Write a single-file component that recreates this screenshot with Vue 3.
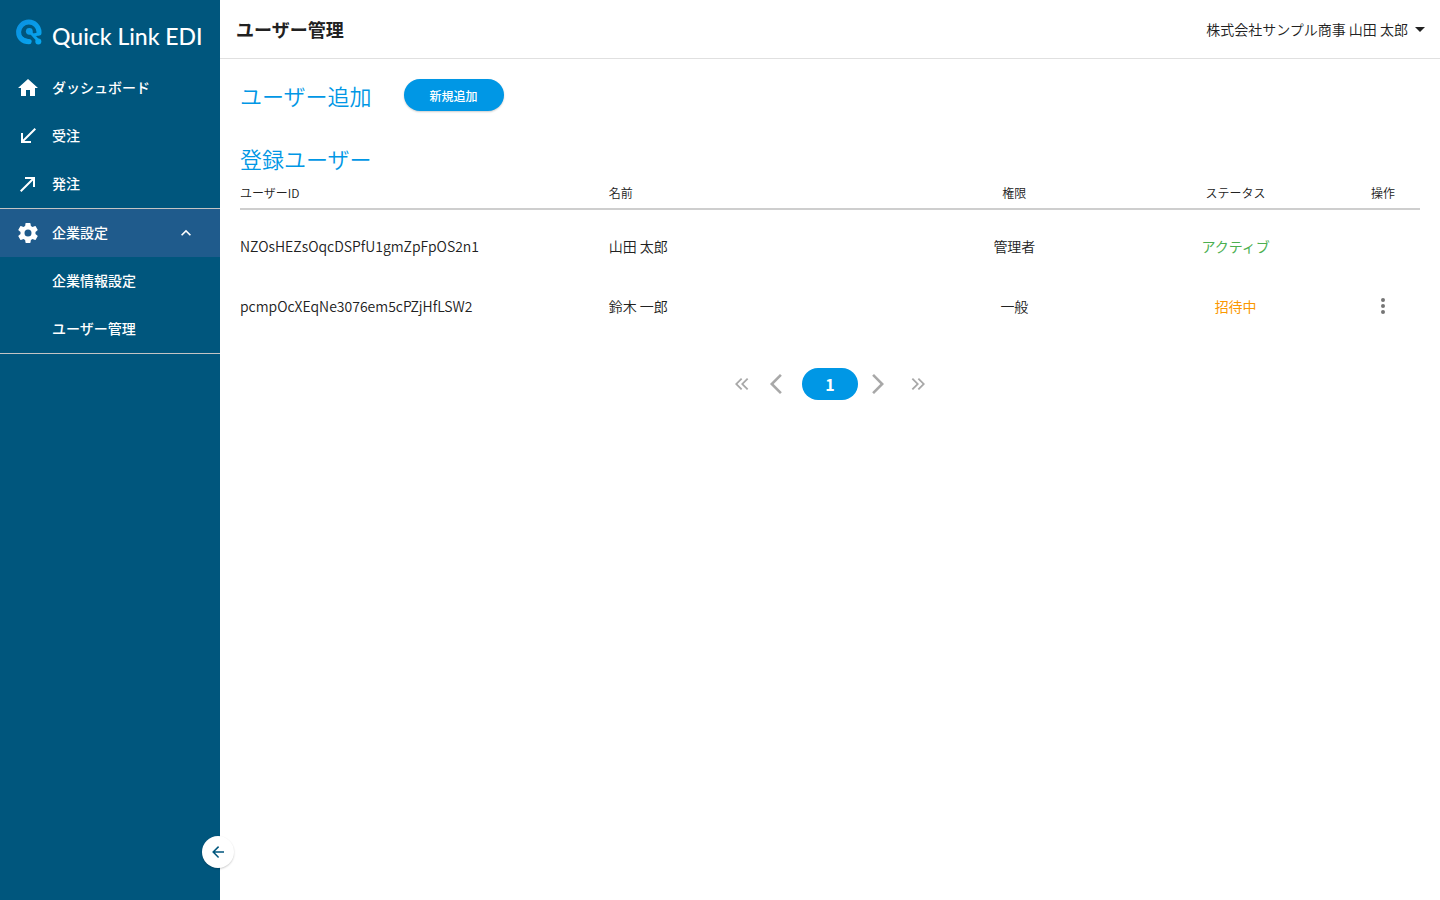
<template>
    <div class="layout">
        <aside class="sidebar">
            <a class="brand" href="#">
                <svg class="brand__mark" viewBox="0 0 26 26" aria-hidden="true">
                    <defs>
                        <linearGradient id="brandGradient" gradientUnits="userSpaceOnUse" x1="0" y1="0" x2="26" y2="26">
                            <stop offset="0" stop-color="#0b8fe0" />
                            <stop offset="1" stop-color="#06a8f0" />
                        </linearGradient>
                    </defs>
                    <g fill="none" stroke="url(#brandGradient)" stroke-linecap="round">
                        <path stroke-width="5" d="M23 14V13A10.2 10.2 0 0 0 12.8 3A10.2 10.2 0 0 0 2.6 13C2.6 19 7 22.8 13 22.8" />
                        <path stroke-width="3" d="M4 17C7 21 10 21.5 14 22M13.5 12.5l3.5 3.5 5.5 6M17.5 16l5-1" />
                    </g>
                    <g fill="url(#brandGradient)">
                        <circle cx="13.3" cy="12.3" r="3.4" />
                        <circle cx="22.3" cy="22.5" r="3" />
                    </g>
                </svg>
                <span class="brand__name">Quick Link EDI</span>
            </a>

            <nav class="nav">
                <a v-for="item in navItems" :key="item.label" class="nav__item" href="#">
                    <svg class="icon" viewBox="0 0 24 24" aria-hidden="true"><path :d="item.icon" /></svg>
                    <span class="nav__label">{{ item.label }}</span>
                </a>
                <div class="nav__group">
                    <button
                        type="button"
                        class="nav__item nav__item--active"
                        :aria-expanded="settingsOpen"
                        @click="settingsOpen = !settingsOpen"
                    >
                        <svg class="icon" viewBox="0 0 24 24" aria-hidden="true"><path :d="ICONS.cog" /></svg>
                        <span class="nav__label">企業設定</span>
                        <svg
                            class="icon icon--sm nav__chevron"
                            :class="{ 'nav__chevron--closed': !settingsOpen }"
                            viewBox="0 0 24 24"
                            aria-hidden="true"
                        >
                            <path :d="ICONS.chevronUp" />
                        </svg>
                    </button>
                    <template v-if="settingsOpen">
                        <a v-for="label in settingsItems" :key="label" class="nav__item nav__item--child" href="#">
                            <span class="nav__label">{{ label }}</span>
                        </a>
                    </template>
                </div>
            </nav>

            <button type="button" class="sidebar__toggle" aria-label="メニューを閉じる">
                <svg class="icon icon--xs" viewBox="0 0 24 24" aria-hidden="true"><path :d="ICONS.arrowLeft" /></svg>
            </button>
        </aside>

        <div class="page">
            <header class="topbar">
                <h1 class="topbar__title">ユーザー管理</h1>
                <button type="button" class="account">
                    <span>株式会社サンプル商事 山田 太郎</span>
                    <svg class="icon" viewBox="0 0 24 24" aria-hidden="true"><path d="M7 10l5 5 5-5z" /></svg>
                </button>
            </header>

            <main class="content">
                <section class="add">
                    <h2 class="heading">ユーザー追加</h2>
                    <button type="button" class="add__button">新規追加</button>
                </section>

                <section>
                    <h2 class="heading">登録ユーザー</h2>
                    <table class="users">
                        <thead>
                            <tr>
                                <th class="users__id">ユーザーID</th>
                                <th class="users__name">名前</th>
                                <th class="users__role">権限</th>
                                <th class="users__status">ステータス</th>
                                <th class="users__action">操作</th>
                            </tr>
                        </thead>
                        <tbody>
                            <tr v-for="user in users" :key="user.id">
                                <td>{{ user.id }}</td>
                                <td>{{ user.name }}</td>
                                <td class="center">{{ user.role }}</td>
                                <td class="center" :class="`status--${user.status}`">
                                    {{ STATUS_LABELS[user.status] }}
                                </td>
                                <td class="center">
                                    <button
                                        v-if="user.status === 'invited'"
                                        type="button"
                                        class="menu-button"
                                        aria-label="操作メニュー"
                                    >
                                        <svg class="icon" viewBox="0 0 24 24" aria-hidden="true">
                                            <path :d="ICONS.dots" />
                                        </svg>
                                    </button>
                                </td>
                            </tr>
                        </tbody>
                    </table>
                </section>

                <nav class="pager" aria-label="ページ">
                    <button type="button" class="pager__edge" aria-label="最初">
                        <svg class="icon" viewBox="0 0 24 24" aria-hidden="true"><path :d="ICONS.first" /></svg>
                    </button>
                    <button type="button" class="pager__step" aria-label="前へ">
                        <svg class="icon icon--lg" viewBox="0 0 24 24" aria-hidden="true"><path :d="ICONS.prev" /></svg>
                    </button>
                    <button type="button" class="pager__page" aria-current="page">1</button>
                    <button type="button" class="pager__step" aria-label="次へ">
                        <svg class="icon icon--lg" viewBox="0 0 24 24" aria-hidden="true"><path :d="ICONS.next" /></svg>
                    </button>
                    <button type="button" class="pager__edge pager__edge--last" aria-label="最後">
                        <svg class="icon" viewBox="0 0 24 24" aria-hidden="true"><path :d="ICONS.last" /></svg>
                    </button>
                </nav>
            </main>
        </div>
    </div>
</template>

<script setup>
import { ref } from 'vue';

const ICONS = {
    home: 'M10 20v-6h4v6h5v-8h3L12 3 2 12h3v8z',
    received: 'M20 5.41L18.59 4 7 15.59V9H5v10h10v-2H8.41z',
    made: 'M9 5v2h6.59L4 18.59 5.41 20 17 8.41V15h2V5z',
    cog: 'M12 15.5A3.5 3.5 0 0 1 8.5 12 3.5 3.5 0 0 1 12 8.5a3.5 3.5 0 0 1 3.5 3.5 3.5 3.5 0 0 1-3.5 3.5m7.43-2.53c.04-.32.07-.64.07-.97 0-.33-.03-.66-.07-1l2.11-1.63c.19-.15.24-.42.12-.64l-2-3.46c-.12-.22-.39-.31-.61-.22l-2.49 1c-.52-.39-1.06-.73-1.69-.98l-.37-2.65A.506.506 0 0 0 14 2h-4c-.25 0-.46.18-.5.42l-.37 2.65c-.63.25-1.17.59-1.69.98l-2.49-1c-.22-.09-.49 0-.61.22l-2 3.46c-.13.22-.07.49.12.64L4.57 11c-.04.34-.07.67-.07 1 0 .33.03.65.07.97l-2.11 1.66c-.19.15-.25.42-.12.64l2 3.46c.12.22.39.3.61.22l2.49-1.01c.52.4 1.06.74 1.69.99l.37 2.65c.04.24.25.42.5.42h4c.25 0 .46-.18.5-.42l.37-2.65c.63-.26 1.17-.59 1.69-.99l2.49 1.01c.22.08.49 0 .61-.22l2-3.46c.12-.22.07-.49-.12-.64z',
    chevronUp: 'M7.41 15.41L12 10.83l4.59 4.58L18 14l-6-6-6 6z',
    arrowLeft: 'M20 11v2H8l5.5 5.5-1.42 1.42L4.16 12l7.92-7.92L13.5 5.5 8 11z',
    dots: 'M12 16a2 2 0 1 1 0 4 2 2 0 0 1 0-4m0-6a2 2 0 1 1 0 4 2 2 0 0 1 0-4m0-6a2 2 0 1 1 0 4 2 2 0 0 1 0-4z',
    first: 'M18.3 7.2L17 6l-6 6 6 6 1.3-1.2L13.5 12zM12.3 7.2L11 6l-6 6 6 6 1.3-1.2L7.5 12z',
    prev: 'M14.4 6l-6 6 6 6 1.1-1.1-4.9-4.9 4.9-4.9z',
    next: 'M9.6 6l6 6-6 6-1.1-1.1 4.9-4.9-4.9-4.9z',
    last: 'M5.7 7.2L7 6l6 6-6 6-1.3-1.2L10.5 12zM11.7 7.2L13 6l6 6-6 6-1.3-1.2L16.5 12z',
};

const STATUS_LABELS = {
    active: 'アクティブ',
    invited: '招待中',
};

const navItems = [
    { label: 'ダッシュボード', icon: ICONS.home },
    { label: '受注', icon: ICONS.received },
    { label: '発注', icon: ICONS.made },
];

const settingsItems = ['企業情報設定', 'ユーザー管理'];
const settingsOpen = ref(true);

const users = ref([
    { id: 'NZOsHEZsOqcDSPfU1gmZpFpOS2n1', name: '山田 太郎', role: '管理者', status: 'active' },
    { id: 'pcmpOcXEqNe3076em5cPZjHfLSW2', name: '鈴木 一郎', role: '一般', status: 'invited' },
]);
</script>

<style>
body {
    margin: 0;
    background: #fff;
}
</style>

<style scoped>
.layout {
    display: flex;
    min-height: 100vh;
    font-family: 'Noto Sans CJK JP', sans-serif;
    font-size: 14px;
    font-weight: 350;
    line-height: 20px;
    color: #212121;
}

button {
    padding: 0;
    border: 0;
    background: none;
    font: inherit;
    color: inherit;
    cursor: pointer;
}

a {
    color: inherit;
    text-decoration: none;
}

.icon {
    display: block;
    flex: none;
    width: 24px;
    height: 24px;
    fill: currentColor;
}

.icon--xs {
    width: 18px;
    height: 18px;
}

.icon--sm {
    width: 20px;
    height: 20px;
}

.icon--lg {
    width: 40px;
    height: 40px;
}

.sidebar {
    position: relative;
    flex: none;
    width: 220px;
    background: #00567d;
    color: #fff;
}

.brand {
    display: flex;
    align-items: center;
    gap: 10px;
    height: 64px;
    padding: 0 16px;
    box-sizing: border-box;
}

.brand__mark {
    flex: none;
    width: 26px;
    height: 26px;
}

.brand__name {
    padding-top: 8px;
    font-family: Lato, sans-serif;
    font-size: 23px;
    font-weight: 500;
    line-height: 24px;
    white-space: nowrap;
}

.nav__item {
    display: flex;
    align-items: center;
    gap: 12px;
    width: 100%;
    height: 48px;
    padding: 0 24px 0 16px;
    box-sizing: border-box;
    font-weight: 500;
}

.nav__item--active {
    background: #1f5b8c;
}

.nav__item--child {
    padding-left: 52px;
}

.nav__label {
    padding-bottom: 2px;
}

.nav__group {
    border-top: 1px solid #c4c4c4;
    border-bottom: 1px solid #c4c4c4;
}

.nav__chevron {
    margin-left: auto;
}

.nav__chevron--closed {
    transform: rotate(180deg);
}

.sidebar__toggle {
    position: absolute;
    right: -14px;
    bottom: 32px;
    display: grid;
    place-items: center;
    width: 32px;
    height: 32px;
    border-radius: 50%;
    background: #fff;
    color: #00567d;
    box-shadow: 0 1px 2px rgba(0, 0, 0, 0.2);
}

.page {
    flex: 1;
    min-width: 0;
}

.topbar {
    display: flex;
    align-items: center;
    justify-content: space-between;
    height: 58px;
    padding: 0 8px 0 16px;
    border-bottom: 1px solid #e0e0e0;
}

.topbar__title {
    margin: 0;
    font-size: 18px;
    font-weight: 700;
    line-height: 28px;
}

.account {
    display: flex;
    align-items: center;
}

.content {
    padding: 20px;
}

.add {
    display: flex;
    align-items: center;
    gap: 32px;
    margin-bottom: 31px;
}

.heading {
    margin: 0;
    font-size: 22px;
    font-weight: 350;
    line-height: 32px;
    color: #0097e5;
}

.add__button {
    height: 32px;
    padding: 2px 26px 0;
    border-radius: 16px;
    background: #0097e5;
    color: #fff;
    font-size: 12px;
    font-weight: 500;
    box-shadow: 0 1px 2px rgba(0, 0, 0, 0.2);
}

.users {
    width: 100%;
    table-layout: fixed;
    border-collapse: separate;
    border-spacing: 0;
}

.users th {
    height: 30px;
    padding: 4px 0 0;
    border-bottom: 2px solid #cecece;
    font-size: 12px;
    font-weight: 350;
    text-align: center;
}

.users .users__id,
.users .users__name {
    text-align: left;
}

.users__id {
    width: 31.25%;
}

.users__name {
    width: 25%;
}

.users__role,
.users__status {
    width: 18.75%;
}

.users__action {
    width: 6.25%;
}

.users td {
    height: 60px;
    padding: 0;
}

.users tbody::before {
    content: '';
    display: block;
    height: 6px;
}

.users .center {
    text-align: center;
}

.status--active {
    color: #4caf50;
    font-weight: 400;
}

.status--invited {
    color: #fb9800;
    font-weight: 400;
}

.menu-button {
    display: block;
    margin: 0 auto;
    color: #757575;
}

.pager {
    display: flex;
    align-items: center;
    justify-content: center;
    gap: 2px;
    margin-top: 28px;
    color: #a8a8a8;
}

.pager__page {
    width: 56px;
    height: 32px;
    margin: 0 -2px 0 4px;
    border-radius: 16px;
    background: #0097e5;
    color: #fff;
    font-size: 16px;
    font-weight: 700;
}

.pager__edge--last {
    margin-left: 6px;
}
</style>
